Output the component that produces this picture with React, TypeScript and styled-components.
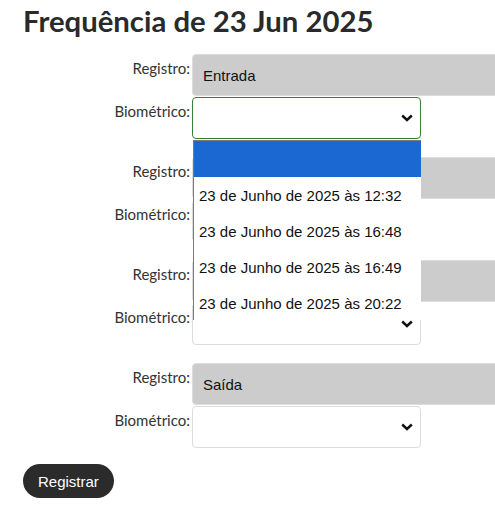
import React from 'react';
import styled, { createGlobalStyle } from 'styled-components';

const GlobalStyle = createGlobalStyle`
  body {
    margin: 0;
    background: #fff;
    font-family: Lato, "Liberation Sans", sans-serif;
  }
`;

const Page = styled.div`
  padding: 3px 0 20px 23px;
  overflow: hidden;
`;

const Title = styled.h1`
  margin: 0 0 15px 0;
  font-family: Lato, sans-serif;
  font-weight: 700;
  font-size: 29.3px;
  line-height: 36px;
  color: #2a2a2a;
`;

const Form = styled.div`
  display: flex;
  flex-direction: column;
  gap: 18px;
`;

const Group = styled.div`
  display: flex;
  flex-direction: column;
  gap: 1px;
`;

const Row = styled.div`
  display: flex;
  align-items: flex-start;
`;

const Label = styled.label`
  flex-shrink: 0;
  width: 167px;
  margin-right: 2px;
  padding-top: 4px;
  text-align: right;
  font-family: Lato, sans-serif;
  font-size: 15px;
  line-height: 20px;
  color: #333;
`;

// runs a few px past the window's right edge, as in the screenshot
const ReadOnly = styled.div`
  box-sizing: border-box;
  flex: 1;
  margin-right: -6px;
  height: 42px;
  padding: 0 10px;
  display: flex;
  align-items: center;
  background: #ccc;
  border: 1px solid #ddd;
  border-radius: 4px;
  font-family: "Liberation Sans", Arial, sans-serif;
  font-size: 15px;
  color: #111;
`;

const SelectWrap = styled.div`
  position: relative;
  flex-shrink: 0;
`;

const SelectBox = styled.div<{ $focused?: boolean }>`
  box-sizing: border-box;
  width: 229px;
  height: 42px;
  display: flex;
  align-items: center;
  justify-content: flex-end;
  padding-right: 7px;
  background: #fff;
  border: 1px solid ${(p) => (p.$focused ? '#3b7f3b' : '#dcdcdc')};
  border-radius: 4px;
`;

const Chevron = () => (
  <svg width="12" height="8" viewBox="0 0 12 8">
    <path d="M1.2 1.5 L6 6 L10.8 1.5" fill="none" stroke="#111" strokeWidth="2.4" />
  </svg>
);

const Dropdown = styled.ul`
  position: absolute;
  top: 43px;
  left: 1px;
  width: 228px;
  height: 180px;
  margin: 0;
  padding: 0;
  list-style: none;
  background: #fff;
  border-top: 1px solid #7a7a7a;
  border-left: 1px solid #7a7a7a;
  box-sizing: border-box;
  overflow: hidden;
  z-index: 10;
`;

const Option = styled.li<{ $active?: boolean }>`
  height: 36px;
  padding-left: 5px;
  display: flex;
  align-items: center;
  background: ${(p) => (p.$active ? '#1b68d3' : '#fff')};
  font-family: "Liberation Sans", Arial, sans-serif;
  font-size: 15px;
  color: #111;
`;

const Button = styled.button`
  display: block;
  margin-top: 16px;
  height: 34px;
  padding: 0 15px;
  border: none;
  border-radius: 17px;
  background: #2b2b2b;
  color: #fff;
  font-family: "Liberation Sans", Arial, sans-serif;
  font-size: 15px;
  cursor: pointer;
`;

const options = [
  '23 de Junho de 2025 às 12:32',
  '23 de Junho de 2025 às 16:48',
  '23 de Junho de 2025 às 16:49',
  '23 de Junho de 2025 às 20:22',
];

const registros = ['Entrada', '', '', 'Saída'];

export default function App() {
  return (
    <Page>
      <GlobalStyle />
      <Title>Frequência de 23 Jun 2025</Title>
      <Form>
        {registros.map((reg, i) => (
          <Group key={i}>
            <Row>
              <Label>Registro:</Label>
              <ReadOnly>{reg}</ReadOnly>
            </Row>
            <Row>
              <Label>Biométrico:</Label>
              <SelectWrap>
                <SelectBox $focused={i === 0}>
                  <Chevron />
                </SelectBox>
                {i === 0 && (
                  <Dropdown>
                    <Option $active />
                    {options.map((o) => (
                      <Option key={o}>{o}</Option>
                    ))}
                  </Dropdown>
                )}
              </SelectWrap>
            </Row>
          </Group>
        ))}
      </Form>
      <Button>Registrar</Button>
    </Page>
  );
}
